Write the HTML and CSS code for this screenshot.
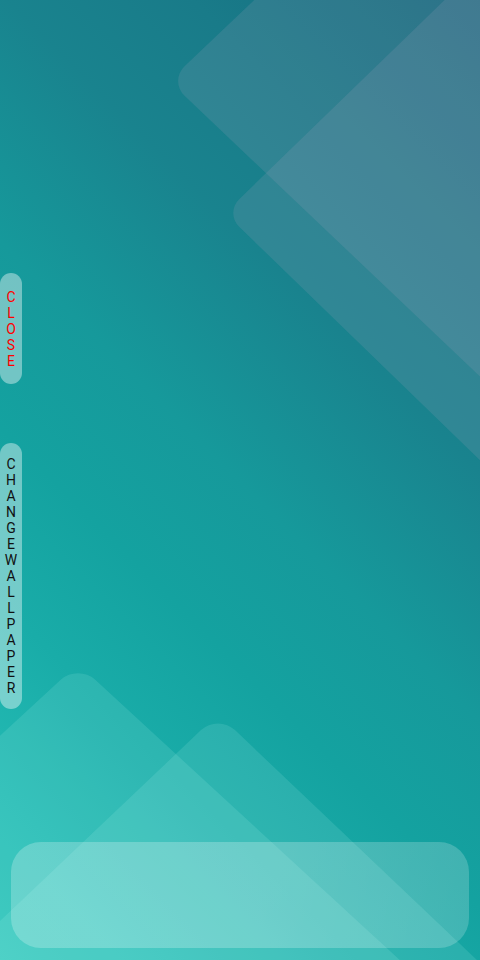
FILE: index.html
```html
<!DOCTYPE html>
<html lang="en">
<head>
<meta charset="utf-8">
<title>Wallpaper</title>
<link rel="stylesheet" href="styles.css">
</head>
<body>
<div class="screen">
  <svg class="wallpaper" width="480" height="960" viewBox="0 0 480 960" aria-hidden="true">
    <rect class="shape-dark" x="0" y="0" width="700" height="700" rx="22" transform="translate(169 81) scale(1 0.95) rotate(-45)"/>
    <rect class="shape-dark" x="0" y="0" width="700" height="700" rx="20" transform="translate(225 213) scale(1 0.97) rotate(-45)"/>
    <rect class="shape-light" x="0" y="0" width="600" height="600" rx="24" transform="translate(78 664) scale(1 0.92) rotate(45)"/>
    <rect class="shape-light" x="0" y="0" width="600" height="600" rx="24" transform="translate(218 714) scale(1 0.95) rotate(45)"/>
  </svg>
  <div class="content">
    <div class="side">
      <div class="pill pill-close">
        <span>C</span><span>L</span><span>O</span><span>S</span><span>E</span>
      </div>
      <div class="pill pill-change">
        <span>C</span><span>H</span><span>A</span><span>N</span><span>G</span><span>E</span><span>W</span><span>A</span><span>L</span><span>L</span><span>P</span><span>A</span><span>P</span><span>E</span><span>R</span>
      </div>
    </div>
    <div class="dock"></div>
  </div>
</div>
</body>
</html>
```

FILE: styles.css
```css
html, body {
  margin: 0;
  padding: 0;
}

body {
  font-family: Roboto, "Liberation Sans", sans-serif;
  background: #1a8a92;
}

.screen {
  position: relative;
  width: 480px;
  height: 960px;
  overflow: hidden;
  background: linear-gradient(225deg, #156a7e 0%, #197b89 20%, #19838e 33%, #16999b 50%, #14a2a0 63%, #19aca8 75%, #23bab3 88%, #2cc4ba 100%);
}

.wallpaper {
  position: absolute;
  left: 0;
  top: 0;
}

.shape-dark {
  fill: rgba(180, 165, 195, 0.15);
}

.shape-light {
  fill: rgba(200, 255, 250, 0.12);
}

.content {
  position: relative;
  height: 100%;
  display: flex;
  flex-direction: column;
}

.side {
  display: flex;
  flex-direction: column;
  align-items: flex-start;
  gap: 59px;
  padding-top: 273px;
}

.pill {
  width: 22px;
  border-radius: 11px;
  background: rgba(255, 255, 255, 0.4);
  display: flex;
  flex-direction: column;
  align-items: center;
  font-size: 14px;
  line-height: 16px;
}

.pill span {
  display: block;
  text-align: center;
}

.pill-close {
  padding: 16px 0 15px;
  color: #ff0000;
}

.pill-change {
  padding: 13px 0;
  color: #111111;
}

.dock {
  margin: auto 11px 12px;
  height: 106px;
  border-radius: 30px;
  background: linear-gradient(100deg, rgba(255, 255, 255, 0.23) 0%, rgba(255, 255, 255, 0.23) 55%, rgba(255, 255, 255, 0.19) 100%);
}
```
